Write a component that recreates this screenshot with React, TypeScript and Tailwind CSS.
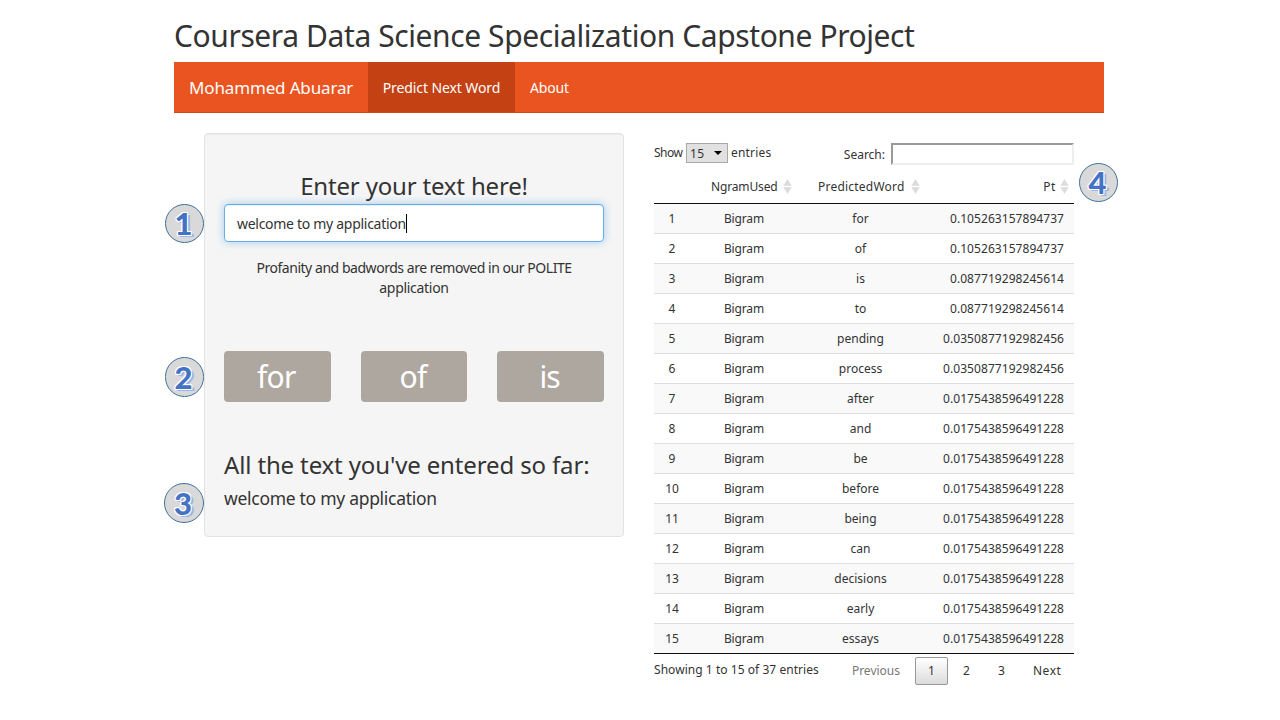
import type { ReactNode } from "react";

const rows: [string, string][] = [
  ["for", "0.105263157894737"],
  ["of", "0.105263157894737"],
  ["is", "0.087719298245614"],
  ["to", "0.087719298245614"],
  ["pending", "0.0350877192982456"],
  ["process", "0.0350877192982456"],
  ["after", "0.0175438596491228"],
  ["and", "0.0175438596491228"],
  ["be", "0.0175438596491228"],
  ["before", "0.0175438596491228"],
  ["being", "0.0175438596491228"],
  ["can", "0.0175438596491228"],
  ["decisions", "0.0175438596491228"],
  ["early", "0.0175438596491228"],
  ["essays", "0.0175438596491228"],
];

function SortIcon() {
  return (
    <svg width="9" height="15" viewBox="0 0 9 15" className="shrink-0" fill="#dcdcdc">
      <path d="M4.5 0L8.7 6.7H.3zM4.5 15L8.7 8.2H.3z" />
    </svg>
  );
}

function Badge({ className, children }: { className: string; children: ReactNode }) {
  return (
    <div
      className={`absolute flex items-center justify-center rounded-full border border-[#41719c] bg-[#d9d9d9] pr-[2px] font-['Lato'] text-[31px] leading-none font-black text-[#4472c4] [text-shadow:-1px_-1px_0_#fff,1px_-1px_0_#fff,-1px_1px_0_#fff,1px_1px_0_#fff,0_-1px_0_#fff,-1px_0_0_#fff,2px_2px_0_#9db5e6,3px_2px_0_#9db5e6] ${className}`}
    >
      {children}
    </div>
  );
}

function WordButton({ children }: { children: ReactNode }) {
  return (
    <button className="h-[51px] rounded bg-[#aea79f] pr-[2px] text-[30px] leading-[51px] tracking-[-0.8px] text-white">
      {children}
    </button>
  );
}

function Sidebar() {
  return (
    <section className="h-[404px] w-[420px] rounded border border-[#e3e3e3] bg-[#f5f5f5] px-[19px] pt-[38px] shadow-[inset_0_1px_1px_rgba(0,0,0,0.05)]">
      <h3 className="h-8 text-center text-[24px] leading-[27px] tracking-[-0.18px]">
        Enter your text here!
      </h3>
      <div className="flex h-[38px] items-center rounded border border-[#66afe9] bg-white px-3 text-[14px] tracking-[-0.29px] shadow-[inset_0_1px_1px_rgba(0,0,0,0.075),0_0_8px_rgba(102,175,233,0.6)]">
        welcome to my application
        <span className="h-[19px] w-px bg-black" />
      </div>
      <p className="mt-4 text-center text-[14px] leading-5 tracking-[-0.46px]">
        Profanity and badwords are removed in our POLITE
        <br />
        <span className="tracking-[-0.3px]">application</span>
      </p>
      <div className="mt-[53px] grid grid-cols-3 gap-[30px]">
        <WordButton>for</WordButton>
        <WordButton>of</WordButton>
        <WordButton>is</WordButton>
      </div>
      <h3 className="mt-[49px] text-[24px] leading-[27px] tracking-[-0.14px] whitespace-nowrap">
        All the text you've entered so far:
      </h3>
      <p className="mt-[10px] text-[17.5px] leading-5 tracking-[-0.29px]">welcome to my application</p>
    </section>
  );
}

function ResultsTable() {
  return (
    <section className="w-[420px] pt-[10px] text-[12px]">
      <div className="flex h-[26px] items-start justify-between">
        <div className="flex h-5 items-center">
          <span className="w-8 tracking-[-0.5px]">Show</span>
          <span className="flex h-5 w-[42px] items-center justify-between border border-[#a9a9a9] bg-[#e1e1e1] pr-[5px] pl-[3px]">
            <span className="pt-px tracking-[0.3px]">15</span>
            <svg width="8" height="4" viewBox="0 0 8 4">
              <path d="M0 0H8L4 4z" />
            </svg>
          </span>
          <span className="ml-[3px] tracking-[0.2px]">entries</span>
        </div>
        <div className="flex h-[22px] items-center">
          <span className="mr-[6px] pt-[2px]">Search:</span>
          <span className="h-[22px] w-[183px] border-2 border-t-[#9a9a9a] border-r-[#eeeeee] border-b-[#eeeeee] border-l-[#9a9a9a] bg-white" />
        </div>
      </div>
      <div className="grid h-[35px] grid-cols-[36px_108px_125px_151px] items-center border-b border-[#111]">
        <span />
        <span className="flex items-center gap-[5px] pl-[21px] tracking-[-0.15px]">
          <span className="pt-[2px]">NgramUsed</span>
          <SortIcon />
        </span>
        <span className="flex items-center gap-[6px] pl-5 tracking-[0.22px]">
          <span className="pt-[2px]">PredictedWord</span>
          <SortIcon />
        </span>
        <span className="flex items-center justify-end gap-1 pr-[5px] tracking-[0.6px]">
          <span className="pt-[2px]">Pt</span>
          <SortIcon />
        </span>
      </div>
      <div>
        {rows.map(([word, p], i) => (
          <div
            key={word}
            className="grid h-[30px] grid-cols-[36px_108px_125px_151px] items-center border-b border-[#ddd] pt-px text-center last:border-[#111] odd:bg-[#f9f9f9]"
          >
            <span>{i + 1}</span>
            <span className="tracking-[-0.14px]">Bigram</span>
            <span>{word}</span>
            <span className="pr-[10px] text-right tracking-[0.055px]">{p}</span>
          </div>
        ))}
      </div>
      <div className="flex justify-between">
        <span className="pt-[7px] leading-[18px] tracking-[0.046px]">Showing 1 to 15 of 37 entries</span>
        <div className="mt-[3px] flex h-7 items-center text-[#333]">
          <span className="mr-[15px] text-[#777]">Previous</span>
          <span className="flex h-7 w-[33px] items-center justify-center rounded-[2px] border border-[#979797] bg-linear-to-b from-white to-[#dcdcdc]">
            1
          </span>
          <span className="w-9 pl-px text-center">2</span>
          <span className="w-[34px] pl-px text-center">3</span>
          <span className="ml-[15px] w-[41px] tracking-[0.5px]">Next</span>
        </div>
      </div>
    </section>
  );
}

export default function App() {
  return (
    <div className="relative h-[720px] w-[1280px] overflow-hidden bg-white font-['Noto_Sans',sans-serif] text-[#333]">
      <div className="ml-[174px] w-[930px] pt-[19px]">
        <h2 className="h-[43px] text-[30px] leading-[33px] tracking-[-0.41px] whitespace-nowrap">
          Coursera Data Science Specialization Capstone Project
        </h2>
        <nav className="flex h-[51px] items-stretch border-b border-[#d34615] bg-[#e95420] text-[14px] text-white">
          <span className="flex w-[194px] items-center pt-px pl-[15px] text-[17px] tracking-[-0.15px]">
            Mohammed Abuarar
          </span>
          <span className="flex w-[147px] items-center justify-center bg-[#c34113] tracking-[-0.1px]">
            Predict Next Word
          </span>
          <span className="flex items-center px-[15px] tracking-[-0.15px]">About</span>
        </nav>
        <main className="mt-5 flex gap-[30px] pl-[30px]">
          <Sidebar />
          <ResultsTable />
        </main>
      </div>
      <Badge className="top-[204px] left-[165px] size-[39px]">1</Badge>
      <Badge className="top-[357px] left-[165px] h-10 w-[39px]">2</Badge>
      <Badge className="top-[483px] left-[164px] size-10">3</Badge>
      <Badge className="top-[163px] left-[1079px] size-[39px]">4</Badge>
    </div>
  );
}
